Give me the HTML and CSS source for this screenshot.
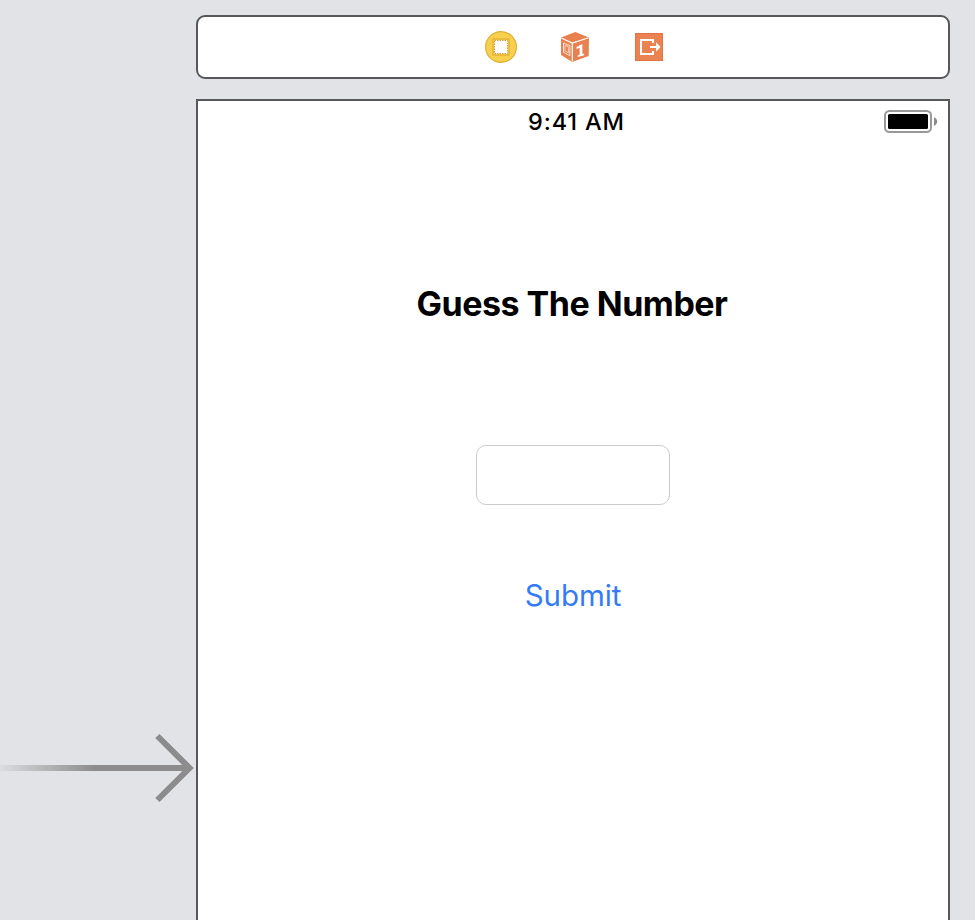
FILE: index.html
```html
<!DOCTYPE html>
<html lang="en">
<head>
<meta charset="utf-8">
<title>Guess The Number</title>
<link rel="stylesheet" href="styles.css">
</head>
<body>
<div class="canvas">
  <aside class="entry">
    <svg class="entry-arrow" width="196" height="72" viewBox="0 0 196 72">
      <defs>
        <linearGradient id="fade" gradientUnits="userSpaceOnUse" x1="0" y1="0" x2="95" y2="0">
          <stop offset="0" stop-color="#8c8c8c" stop-opacity=".08"/>
          <stop offset="1" stop-color="#8c8c8c"/>
        </linearGradient>
      </defs>
      <rect x="0" y="33" width="189" height="6" fill="url(#fade)"/>
      <path d="M157.4 4 189.5 36 157.4 68" fill="none" stroke="#8c8c8c" stroke-width="6"/>
    </svg>
  </aside>
  <main class="scene">
    <header class="dock">
      <svg width="32" height="32" viewBox="0 0 32 32">
        <circle cx="16" cy="16" r="15.4" fill="#f9d04c" stroke="#dfae3a" stroke-width="1.2"/>
        <rect x="8" y="8" width="16" height="16" fill="#f9d04c" stroke="#dba632" stroke-width="1"/>
        <rect x="9" y="9" width="14" height="14" fill="#fff"/>
        <rect x="9.5" y="9.5" width="13" height="13" fill="none" stroke="#d9a22d" stroke-width="1" stroke-dasharray="1.5 1"/>
      </svg>
      <svg width="32" height="32" viewBox="0 0 32 32">
        <path d="M16.3 1 30 6.4 29.7 25 13.2 31 2 24 2 6.5Z" fill="#e8804f"/>
        <path d="M2.3 7 13.3 12 29.6 6.7M13.3 12v18.5" fill="none" stroke="#fff" stroke-width="1.2"/>
        <path d="M4.5 12v9.2l6.4 3.4V14.6" fill="none" stroke="#fff" stroke-width=".8"/>
        <path d="M4.5 12 10.9 14.6" fill="none" stroke="#fff" stroke-width="1.3" stroke-dasharray="1.3 .8"/>
        <path d="M6 14.4 9.4 15.8v6L6 20Z" fill="none" stroke="#fff" stroke-width=".6"/>
        <path d="M20.8 14 23.4 13.2V23L25.2 22.5V24.2L18.8 26V24.3L20.6 23.7V16.8L17.5 17.9V15.9Q20 15.4 20.8 14Z" fill="#fff"/>
      </svg>
      <svg width="32" height="32" viewBox="0 0 32 32">
        <rect x="2.5" y="2.5" width="27" height="27" fill="#ea8251" stroke="#df7443"/>
        <path d="M20 12V9H8v14h12v-3" fill="none" stroke="#fff" stroke-width="2"/>
        <path d="M17 15h6.1v-3.8L27.6 16l-4.5 4.8V17H17Z" fill="#fff"/>
      </svg>
    </header>
    <section class="device">
      <div class="status">
        <span class="time">9:41 AM</span>
        <svg class="battery" width="54" height="24" viewBox="0 0 54 24">
          <rect x="1" y="1" width="46" height="21" rx="4.5" fill="none" stroke="#999" stroke-width="2"/>
          <rect x="4" y="4" width="40" height="15" rx="1.5"/>
          <path d="M50 7.3q3.2 1.5 3.2 4.3t-3.2 4.3Z" fill="#8c8c8c"/>
        </svg>
      </div>
      <h1 class="title">Guess The Number</h1>
      <input class="guess" type="text" aria-label="Guess">
      <button class="submit" type="button">Submit</button>
    </section>
  </main>
</div>
</body>
</html>
```
FILE: styles.css
```css
* { box-sizing: border-box; }

body {
  margin: 0;
  background: #e2e3e7;
  font-family: Inter, "Liberation Sans", sans-serif;
}

.canvas {
  display: grid;
  grid-template-columns: 196px 754px;
  height: 920px;
  overflow: hidden;
}

.entry { padding-top: 732px; }
.entry-arrow { display: block; }

.scene {
  display: flex;
  flex-direction: column;
  gap: 20px;
  padding-top: 15px;
  min-height: 0;
}

.dock {
  display: flex;
  flex: none;
  justify-content: center;
  align-items: center;
  gap: 42px;
  height: 64px;
  padding-left: 4px;
  border: 2px solid #58585a;
  border-radius: 9px;
  background: #fff;
}

.device {
  display: flex;
  flex: 1;
  flex-direction: column;
  align-items: center;
  border: 2px solid #58585a;
  border-bottom: 0;
  background: #fff;
}

.status {
  display: grid;
  grid-template-columns: 1fr auto 1fr;
  align-items: center;
  width: 100%;
  height: 40px;
  padding-right: 10px;
}

.time {
  grid-column: 2;
  margin-left: 17px;
  font-size: 23.5px;
  font-weight: 500;
  letter-spacing: 0.85px;
  white-space: nowrap;
}

.battery {
  justify-self: end;
  margin-top: 2px;
}

.title {
  margin: 142px 2px 0 0;
  font-size: 34px;
  font-weight: 700;
  line-height: 42px;
  letter-spacing: -0.5px;
  white-space: nowrap;
}

.guess {
  width: 194px;
  height: 60px;
  margin-top: 120px;
  padding: 0 14px;
  border: 1px solid #ccc;
  border-radius: 10px;
  background: #fff;
  font: inherit;
  font-size: 28px;
}

.submit {
  margin-top: 71px;
  padding: 0;
  border: 0;
  background: none;
  color: #347cf6;
  font: inherit;
  font-size: 29.5px;
  line-height: 38px;
  letter-spacing: -0.1px;
}
```
